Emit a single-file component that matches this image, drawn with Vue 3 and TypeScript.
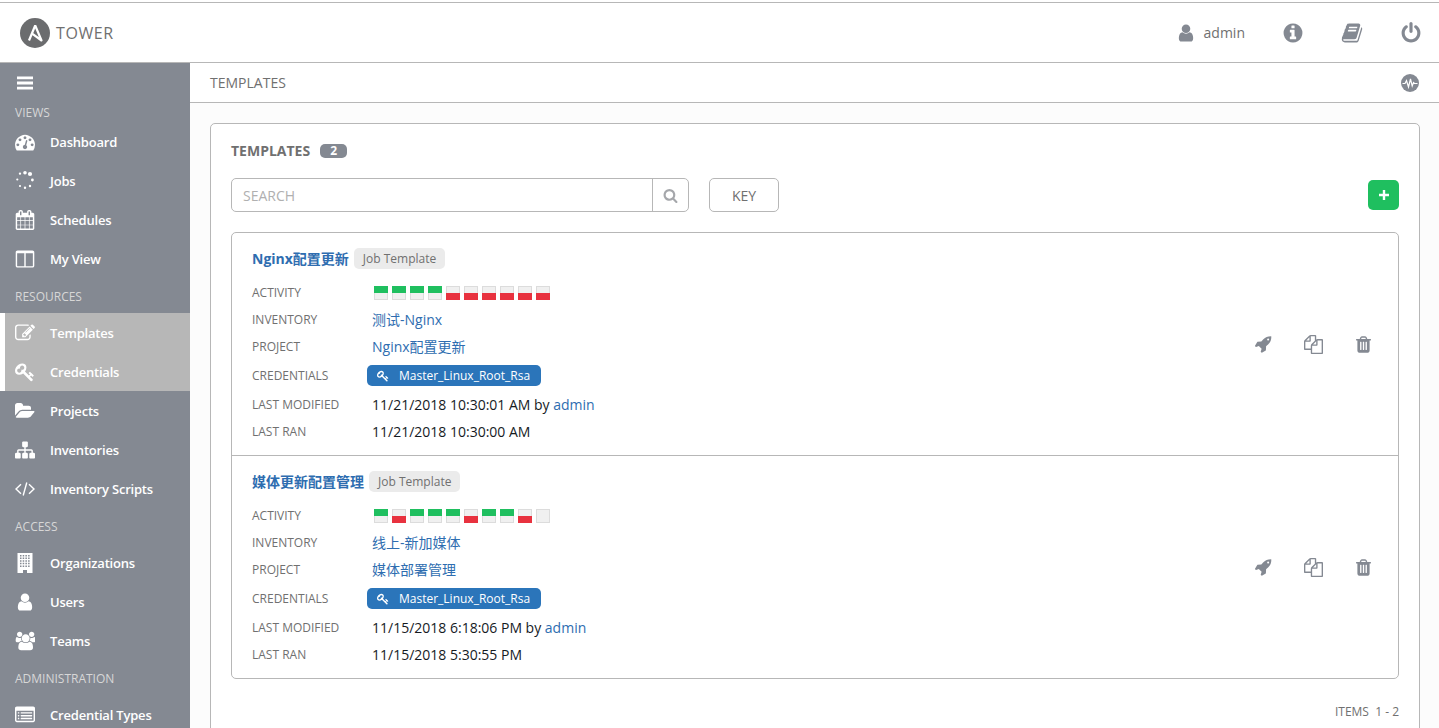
<script setup lang="ts">
import { h } from 'vue'

type IconDef = { vb?: string; d?: string; s?: string; sw?: number; rule?: 'evenodd' }

const dot = (x: number, y: number, r: number) =>
  `M${x - r} ${y}a${r} ${r} 0 1 0 ${2 * r} 0a${r} ${r} 0 1 0 ${-2 * r} 0z`

const windows = (() => {
  let d = 'M2.5 0h15v20h-5.5v-3h-4v3h-5.5z'
  for (let r = 0; r < 5; r++) for (let c = 0; c < 4; c++) d += `M${5 + c * 2.7} ${2 + r * 2.6}h1.5v1.5h-1.5z`
  return d
})()

const icons: Record<string, IconDef> = {
  bars: { vb: '0 0 20 20', d: 'M2 3.5h16v2.8H2zM2 8.6h16v2.8H2zM2 13.7h16v2.8H2z' },
  dashboard: { d: 'M384 1152q0-53-37.5-90.5t-90.5-37.5-90.5 37.5-37.5 90.5 37.5 90.5 90.5 37.5 90.5-37.5 37.5-90.5zm192-448q0-53-37.5-90.5t-90.5-37.5-90.5 37.5-37.5 90.5 37.5 90.5 90.5 37.5 90.5-37.5 37.5-90.5zm428 481l101-382q6-26-7.5-48.5t-38.5-29.5-48 6.5-30 39.5l-101 382q-60 5-107 43.5t-63 98.5q-20 77 20 146t117 89 146-20 89-117q16-60-6-117t-72-91zm660-33q0-53-37.5-90.5t-90.5-37.5-90.5 37.5-37.5 90.5 37.5 90.5 90.5 37.5 90.5-37.5 37.5-90.5zm-640-640q0-53-37.5-90.5t-90.5-37.5-90.5 37.5-37.5 90.5 37.5 90.5 90.5 37.5 90.5-37.5 37.5-90.5zm448 192q0-53-37.5-90.5t-90.5-37.5-90.5 37.5-37.5 90.5 37.5 90.5 90.5 37.5 90.5-37.5 37.5-90.5zm320 448q0 261-141 483-19 29-54 29h-1402q-35 0-54-29-141-221-141-483 0-182 71-348t191-286 286-191 348-71 348 71 286 191 191 286 71 348z' },
  jobs: { vb: '0 0 20 20', d: dot(15, 3, 2.1) + dot(10, 1.8, 1.8) + dot(5, 2.6, 1.2) + dot(2.3, 8.5, 1.1) + dot(5, 15, 1.1) + dot(10, 16.8, 1.2) + dot(15, 15, 1.2) + dot(17.4, 9, 1.4) },
  calendar: { d: 'M192 1664h288v-288h-288v288zm352 0h320v-288h-320v288zm-352-352h288v-320h-288v320zm352 0h320v-320h-320v320zm-352-384h288v-288h-288v288zm736 736h320v-288h-320v288zm-384-736h320v-288h-320v288zm768 736h288v-288h-288v288zm-384-352h320v-320h-320v320zm-352-864v-288q0-13-9.5-22.5t-22.5-9.5h-64q-13 0-22.5 9.5t-9.5 22.5v288q0 13 9.5 22.5t22.5 9.5h64q13 0 22.5-9.5t9.5-22.5zm736 864h288v-320h-288v320zm-384-384h320v-288h-320v288zm384 0h288v-288h-288v288zm32-480v-288q0-13-9.5-22.5t-22.5-9.5h-64q-13 0-22.5 9.5t-9.5 22.5v288q0 13 9.5 22.5t22.5 9.5h64q13 0 22.5-9.5t9.5-22.5zm384-64v1280q0 52-38 90t-90 38h-1408q-52 0-90-38t-38-90v-1280q0-52 38-90t90-38h128v-96q0-66 47-113t113-47h64q66 0 113 47t47 113v96h384v-96q0-66 47-113t113-47h64q66 0 113 47t47 113v96h128q52 0 90 38t38 90z' },
  columns: { d: 'M224 1536h608v-1152h-640v1120q0 13 9.5 22.5t22.5 9.5zm1376-32v-1120h-640v1152h608q13 0 22.5-9.5t9.5-22.5zm128-1216v1216q0 66-47 113t-113 47h-1344q-66 0-113-47t-47-113v-1216q0-66 47-113t113-47h1344q66 0 113 47t47 113z' },
  pencil: { d: 'M888 1184l116-116-152-152-116 116v56h96v96h56zm440-720q-16-16-33 1l-350 350q-17 17-1 33t33-1l350-350q17-17 1-33zm80 594v190q0 119-84.5 203.5t-203.5 84.5h-832q-119 0-203.5-84.5t-84.5-203.5v-832q0-119 84.5-203.5t203.5-84.5h832q63 0 117 25 15 7 18 23 3 17-9 29l-49 49q-14 14-32 8-23-6-45-6h-832q-66 0-113 47t-47 113v832q0 66 47 113t113 47h832q66 0 113-47t47-113v-126q0-13 9-22l64-64q15-15 35-7t20 29zm-96-738l288 288-672 672h-288v-288zm444 132l-92 92-288-288 92-92q28-28 68-28t68 28l152 152q28 28 28 68t-28 68z' },
  key: { d: 'M832 512q0-80-56-136t-136-56-136 56-56 136q0 42 19 83-41-19-83-19-80 0-136 56t-56 136 56 136 136 56 136-56 56-136q0-42-19-83 41 19 83 19 80 0 136-56t56-136zm851 704q0 17-49 66t-66 49q-9 0-28.5-16t-36.5-33-38.5-40-24.5-26l-96 96 220 220q28 28 28 68 0 42-39 81t-81 39q-40 0-68-28l-671-671q-176 131-365 131-163 0-265.5-102.5t-102.5-265.5q0-160 95-313t248-248 313-95q163 0 265.5 102.5t102.5 265.5q0 189-131 365l355 355 96-96q-3-3-26-24.5t-40-38.5-33-36.5-16-28.5q0-17 49-66t66-49q13 0 23 10 6 6 46 44.5t82 79.5 86.5 86 73 78 28.5 41z' },
  folder: { vb: '0 0 1920 1792', d: 'M1879 952q0 31-31 66l-336 396q-43 51-120.5 86.5t-143.5 35.5h-1088q-34 0-60.5-13t-26.5-43q0-31 31-66l336-396q43-51 120.5-86.5t143.5-35.5h1088q34 0 60.5 13t26.5 43zm-343-344v160h-832q-94 0-197 47.5t-164 119.5l-337 396-5 6q0-4-.5-12.5t-.5-12.5v-960q0-92 66-158t158-66h320q92 0 158 66t66 158v32h544q92 0 158 66t66 158z' },
  sitemap: { d: 'M1792 1248v320q0 40-28 68t-68 28h-320q-40 0-68-28t-28-68v-320q0-40 28-68t68-28h96v-192h-512v192h96q40 0 68 28t28 68v320q0 40-28 68t-68 28h-320q-40 0-68-28t-28-68v-320q0-40 28-68t68-28h96v-192h-512v192h96q40 0 68 28t28 68v320q0 40-28 68t-68 28h-320q-40 0-68-28t-28-68v-320q0-40 28-68t68-28h96v-192q0-52 38-90t90-38h512v-192h-96q-40 0-68-28t-28-68v-320q0-40 28-68t68-28h320q40 0 68 28t28 68v320q0 40-28 68t-68 28h-96v192h512q52 0 90 38t38 90v192h96q40 0 68 28t28 68z' },
  code: { vb: '0 0 20 20', s: 'M6 5.2L1 10l5 4.8M14 5.2L19 10l-5 4.8M11.8 3.5L8.2 16.5', sw: 1.4 },
  building: { vb: '0 0 20 20', d: windows, rule: 'evenodd' },
  user: { d: 'M1536 1399q0 109-62.5 187t-150.5 78h-854q-88 0-150.5-78t-62.5-187q0-85 8.5-160.5t31.5-152 58.5-131 94-89 134.5-34.5q131 128 313 128t313-128q76 0 134.5 34.5t94 89 58.5 131 31.5 152 8.5 160.5zm-256-887q0 159-112.5 271.5t-271.5 112.5-271.5-112.5-112.5-271.5 112.5-271.5 271.5-112.5 271.5 112.5 112.5 271.5z' },
  users: { vb: '0 0 1920 1792', d: 'M657 896q-162 5-265 128h-134q-82 0-138-40.5t-56-118.5q0-353 124-353 6 0 43.5 21t97.5 42.5 119 21.5q67 0 133-23-5 37-5 66 0 139 81 256zm1071 637q0 120-73 189.5t-194 69.5h-874q-121 0-194-69.5t-73-189.5q0-53 3.5-103.5t14-109 26.5-108.5 43-97.5 62-81 85.5-53.5 111.5-20q10 0 43 21.5t73 48 107 48 135 21.5 135-21.5 107-48 73-48 43-21.5q61 0 111.5 20t85.5 53.5 62 81 43 97.5 26.5 108.5 14 109 3.5 103.5zm-1024-1277q0 106-75 181t-181 75-181-75-75-181 75-181 181-75 181 75 75 181zm704 384q0 159-112.5 271.5t-271.5 112.5-271.5-112.5-112.5-271.5 112.5-271.5 271.5-112.5 271.5 112.5 112.5 271.5zm576 225q0 78-56 118.5t-138 40.5h-134q-103-123-265-128 81-117 81-256 0-29-5-66 66 23 133 23 59 0 119-21.5t97.5-42.5 43.5-21q124 0 124 353zm-128-609q0 106-75 181t-181 75-181-75-75-181 75-181 181-75 181 75 75 181z' },
  list: { d: 'M384 1184v64q0 13-9.5 22.5t-22.5 9.5h-64q-13 0-22.5-9.5t-9.5-22.5v-64q0-13 9.5-22.5t22.5-9.5h64q13 0 22.5 9.5t9.5 22.5zm0-256v64q0 13-9.5 22.5t-22.5 9.5h-64q-13 0-22.5-9.5t-9.5-22.5v-64q0-13 9.5-22.5t22.5-9.5h64q13 0 22.5 9.5t9.5 22.5zm0-256v64q0 13-9.5 22.5t-22.5 9.5h-64q-13 0-22.5-9.5t-9.5-22.5v-64q0-13 9.5-22.5t22.5-9.5h64q13 0 22.5 9.5t9.5 22.5zm1152 512v64q0 13-9.5 22.5t-22.5 9.5h-960q-13 0-22.5-9.5t-9.5-22.5v-64q0-13 9.5-22.5t22.5-9.5h960q13 0 22.5 9.5t9.5 22.5zm0-256v64q0 13-9.5 22.5t-22.5 9.5h-960q-13 0-22.5-9.5t-9.5-22.5v-64q0-13 9.5-22.5t22.5-9.5h960q13 0 22.5 9.5t9.5 22.5zm0-256v64q0 13-9.5 22.5t-22.5 9.5h-960q-13 0-22.5-9.5t-9.5-22.5v-64q0-13 9.5-22.5t22.5-9.5h960q13 0 22.5 9.5t9.5 22.5zm128 704v-832q0-13-9.5-22.5t-22.5-9.5h-1472q-13 0-22.5 9.5t-9.5 22.5v832q0 13 9.5 22.5t22.5 9.5h1472q13 0 22.5-9.5t9.5-22.5zm128-1088v1088q0 66-47 113t-113 47h-1472q-66 0-113-47t-47-113v-1088q0-66 47-113t113-47h1472q66 0 113 47t47 113z' },
  info: { d: 'M1152 1376v-160q0-14-9-23t-23-9h-96v-512q0-14-9-23t-23-9h-320q-14 0-23 9t-9 23v160q0 14 9 23t23 9h96v320h-96q-14 0-23 9t-9 23v160q0 14 9 23t23 9h448q14 0 23-9t9-23zm-128-896v-160q0-14-9-23t-23-9h-192q-14 0-23 9t-9 23v160q0 14 9 23t23 9h192q14 0 23-9t9-23zm640 416q0 209-103 385.5t-279.5 279.5-385.5 103-385.5-103-279.5-279.5-103-385.5 103-385.5 279.5-279.5 385.5-103 385.5 103 279.5 279.5 103 385.5z' },
  power: { d: 'M1664 896q0 156-61 298t-164 245-245 164-298 61-298-61-245-164-164-245-61-298q0-182 80.5-343t226.5-270q43-32 95.5-25t83.5 50q32 42 24.5 94.5t-49.5 84.5q-98 74-151.5 181t-53.5 228q0 104 40.5 198.5t109.5 163.5 163.5 109.5 198.5 40.5 198.5-40.5 163.5-109.5 109.5-163.5 40.5-198.5q0-121-53.5-228t-151.5-181q-42-32-49.5-84.5t24.5-94.5q31-43 84-50t95 25q146 109 226.5 270t80.5 343zm-640-768v640q0 52-38 90t-90 38-90-38-38-90v-640q0-52 38-90t90-38 90 38 38 90z' },
  book: { d: 'M1703 478q40 57 18 129l-275 906q-19 64-76.5 107.5t-122.5 43.5h-923q-77 0-148.5-53.5t-99.5-131.5q-24-67-2-127 0-4 3-27t4-37q1-8-3-21.5t-3-19.5q2-11 8-21t16.5-23.5 16.5-23.5q23-38 45-91.5t30-91.5q3-10 .5-30t-.5-28q3-11 17-28t17-23q21-36 42-92t25-90q1-9-2.5-32t.5-28q4-13 22-30.5t22-22.5q19-26 42.5-84.5t27.5-96.5q1-8-3-25.5t-2-26.5q2-8 9-18t18-23 17-21q8-12 16.5-30.5t15-35 16-36 19.5-32 26.5-23.5 36-11.5 47.5 5.5l-1 3q38-9 51-9h761q74 0 114 56t18 130l-274 906q-36 119-71.5 153.5t-128.5 34.5h-869q-27 0-38 15-11 16-1 43 24 70 144 70h923q29 0 56-15.5t35-41.5l300-987q7-22 5-57 38 15 59 43zm-1064 2q-4 13 2 22.5t20 9.5h608q13 0 25.5-9.5t16.5-22.5l21-64q4-13-2-22.5t-20-9.5h-608q-13 0-25.5 9.5t-16.5 22.5zm-83 256q-4 13 2 22.5t20 9.5h608q13 0 25.5-9.5t16.5-22.5l21-64q4-13-2-22.5t-20-9.5h-608q-13 0-25.5 9.5t-16.5 22.5z' },
  search: { d: 'M1216 832q0-185-131.5-316.5t-316.5-131.5-316.5 131.5-131.5 316.5 131.5 316.5 316.5 131.5 316.5-131.5 131.5-316.5zm512 832q0 52-38 90t-90 38q-54 0-90-38l-343-342q-179 124-399 124-143 0-273.5-55.5t-225-150-150-225-55.5-273.5 55.5-273.5 150-225 225-150 273.5-55.5 273.5 55.5 225 150 150 225 55.5 273.5q0 220-124 399l343 343q37 37 37 90z' },
  rocket: { d: 'M1504 448q0-40-28-68t-68-28-68 28-28 68 28 68 68 28 68-28 28-68zm224-288q0 249-75.5 430.5t-253.5 360.5q-81 80-195 176l-20 379q-2 16-16 26l-384 224q-7 4-16 4-12 0-23-9l-64-64q-13-14-8-32l85-276-281-281-276 85q-3 1-9 1-14 0-23-9l-64-64q-17-19-5-39l224-384q10-14 26-16l379-20q96-114 176-195 188-187 358-258t431-71q14 0 23 9t9 23z' },
  copy: { d: 'M1696 384q40 0 68 28t28 68v1216q0 40-28 68t-68 28h-960q-40 0-68-28t-28-68v-288h-544q-40 0-68-28t-28-68v-672q0-40 20-88t48-76l408-408q28-28 76-48t88-20h416q40 0 68 28t28 68v328q68-40 128-40h416zm-544 213l-299 299h299v-299zm-640-384l-299 299h299v-299zm196 647l316-316v-416h-384v416q0 40-28 68t-68 28h-416v640h512v-256q0-40 20-88t48-76zm956 804v-1152h-384v416q0 40-28 68t-68 28h-416v640h896z' },
  trash: { d: 'M704 1376v-704q0-14-9-23t-23-9h-64q-14 0-23 9t-9 23v704q0 14 9 23t23 9h64q14 0 23-9t9-23zm256 0v-704q0-14-9-23t-23-9h-64q-14 0-23 9t-9 23v704q0 14 9 23t23 9h64q14 0 23-9t9-23zm256 0v-704q0-14-9-23t-23-9h-64q-14 0-23 9t-9 23v704q0 14 9 23t23 9h64q14 0 23-9t9-23zm-544-992h448l-48-117q-7-9-17-11h-317q-10 2-17 11zm928 32v64q0 14-9 23t-23 9h-96v948q0 83-47 143.5t-113 60.5h-832q-66 0-113-58.5t-47-141.5v-952h-96q-14 0-23-9t-9-23v-64q0-14 9-23t23-9h309l70-167q15-37 54-63t79-26h320q40 0 79 26t54 63l70 167h309q14 0 23 9t9 23z' },
  plus: { vb: '0 0 12 12', d: 'M4.8 1h2.4v3.8H11v2.4H7.2V11H4.8V7.2H1V4.8h3.8z' },
}

const Ico = (props: { name: string; size?: number }) => {
  const i = icons[props.name]
  const size = props.size ?? 20
  const kids = []
  if (i.d) kids.push(h('path', { d: i.d, fill: 'currentColor', 'fill-rule': i.rule ?? 'nonzero' }))
  if (i.s) kids.push(h('path', { d: i.s, fill: 'none', stroke: 'currentColor', 'stroke-width': i.sw ?? 1.4 }))
  return h('svg', { viewBox: i.vb ?? '0 0 1792 1792', width: size, height: size }, kids)
}
Ico.props = ['name', 'size']

const nav = [
  { title: 'VIEWS', h: 20, items: [
    { label: 'Dashboard', icon: 'dashboard' },
    { label: 'Jobs', icon: 'jobs' },
    { label: 'Schedules', icon: 'calendar' },
    { label: 'My View', icon: 'columns' },
  ] },
  { title: 'RESOURCES', h: 35, items: [
    { label: 'Templates', icon: 'pencil', active: true },
    { label: 'Credentials', icon: 'key', active: true },
    { label: 'Projects', icon: 'folder' },
    { label: 'Inventories', icon: 'sitemap' },
    { label: 'Inventory Scripts', icon: 'code' },
  ] },
  { title: 'ACCESS', h: 35, items: [
    { label: 'Organizations', icon: 'building' },
    { label: 'Users', icon: 'user' },
    { label: 'Teams', icon: 'users' },
  ] },
  { title: 'ADMINISTRATION', h: 35, items: [
    { label: 'Credential Types', icon: 'list' },
  ] },
]

const templates = [
  {
    name: 'Nginx配置更新',
    activity: 'ssssffffff',
    inventory: '测试-Nginx',
    project: 'Nginx配置更新',
    modified: '11/21/2018 10:30:01 AM',
    ran: '11/21/2018 10:30:00 AM',
  },
  {
    name: '媒体更新配置管理',
    activity: 'sfsssfssfn',
    inventory: '线上-新加媒体',
    project: '媒体部署管理',
    modified: '11/15/2018 6:18:06 PM',
    ran: '11/15/2018 5:30:55 PM',
  },
]
</script>

<template>
  <div class="app">
    <header class="topbar">
      <div class="brand">
        <svg class="logo" viewBox="0 0 30 30" width="30" height="30">
          <circle cx="15" cy="15" r="15" fill="#6b6c6e" />
          <path d="M15.2 7.5L9 22.5M15.2 7.5L21.5 22.5L12.5 15.8" fill="none" stroke="#fff" stroke-width="2.2" stroke-linejoin="round" />
        </svg>
        <span class="brand-name">TOWER</span>
      </div>
      <div class="top-actions">
        <div class="who"><Ico name="user" :size="20" /><span>admin</span></div>
        <Ico name="info" :size="22" />
        <Ico name="book" :size="22" />
        <Ico name="power" :size="22" />
      </div>
    </header>

    <div class="body">
      <aside class="side">
        <div class="burger"><Ico name="bars" /></div>
        <section v-for="s in nav" :key="s.title">
          <div class="side-head" :style="{ height: s.h + 'px' }">{{ s.title }}</div>
          <a v-for="it in s.items" :key="it.label" class="side-item" :class="{ active: it.active }">
            <span class="side-ico"><Ico :name="it.icon" /></span>
            <span>{{ it.label }}</span>
          </a>
        </section>
      </aside>

      <main class="main">
        <div class="crumbs">
          <span>TEMPLATES</span>
          <svg class="pulse" viewBox="0 0 18 18" width="18" height="18">
            <circle cx="9" cy="9" r="9" fill="#848992" />
            <path d="M1.5 9.5h2.5l1.5-3 2 6.5 2-8 1.7 7 1.3-3.5 1 1h3" fill="none" stroke="#fff" stroke-width="1.2" />
          </svg>
        </div>

        <div class="card">
          <div class="card-title">
            <b>TEMPLATES</b>
            <span class="count">2</span>
          </div>

          <div class="tools">
            <div class="search">
              <input class="search-input" placeholder="SEARCH" />
              <span class="search-btn"><Ico name="search" :size="15" /></span>
            </div>
            <button class="key-btn">KEY</button>
            <button class="add-btn"><Ico name="plus" :size="12" /></button>
          </div>

          <div class="list">
            <article v-for="t in templates" :key="t.name" class="row">
              <div class="row-main">
                <div class="row-title">
                  <a class="name">{{ t.name }}</a>
                  <span class="type">Job Template</span>
                </div>
                <div class="field">
                  <label>ACTIVITY</label>
                  <div class="sparks">
                    <i v-for="(a, n) in t.activity.split('')" :key="n" class="spark" :class="a">
                      <em v-if="a !== 'n'"></em>
                    </i>
                  </div>
                </div>
                <div class="field"><label>INVENTORY</label><a>{{ t.inventory }}</a></div>
                <div class="field"><label>PROJECT</label><a>{{ t.project }}</a></div>
                <div class="field cred">
                  <label>CREDENTIALS</label>
                  <span class="chip"><Ico name="key" :size="12" /><span>Master_Linux_Root_Rsa</span></span>
                </div>
                <div class="field"><label>LAST MODIFIED</label><span class="val">{{ t.modified }} by <a>admin</a></span></div>
                <div class="field"><label>LAST RAN</label><span class="val">{{ t.ran }}</span></div>
              </div>
              <div class="row-actions">
                <span class="act rocket"><Ico name="rocket" :size="18" /></span>
                <span class="act"><Ico name="copy" :size="19" /></span>
                <span class="act"><Ico name="trash" :size="19" /></span>
              </div>
            </article>
          </div>

          <div class="pager">ITEMS &nbsp;1 - 2</div>
        </div>
      </main>
    </div>
  </div>
</template>

<style>
html, body { margin: 0; height: 100%; overflow: hidden; background: #fff; }
</style>

<style scoped>
.app {
  height: 728px;
  overflow: hidden;
  font-family: "Open Sans", "Noto Sans CJK SC", sans-serif;
  font-size: 14px;
  line-height: 20px;
  color: #161b1f;
  padding-top: 2px;
  box-sizing: border-box;
  display: flex;
  flex-direction: column;
}
a { color: #2e6db0; text-decoration: none; }
svg { display: block; flex: none; }

.topbar {
  flex: none;
  height: 59px;
  border-top: 1px solid #b7b7b7;
  border-bottom: 1px solid #b7b7b7;
  display: flex;
  align-items: center;
  justify-content: space-between;
  padding: 0 17px 0 20px;
  background: #fff;
}
.brand { display: flex; align-items: center; gap: 6px; }
.brand-name { font-size: 16px; color: #707070; letter-spacing: 0.6px; }
.top-actions { display: flex; align-items: center; gap: 37px; color: #848992; }
.who { display: flex; align-items: center; gap: 8px; }
.who span { color: #707070; font-size: 14px; }

.body { flex: 1; display: flex; min-height: 0; }

.side { flex: none; width: 190px; background: #848992; color: #fff; }
.burger { height: 39px; display: flex; align-items: center; padding-left: 15px; }
.side-head {
  box-sizing: border-box;
  display: flex;
  align-items: center;
  padding: 2px 0 0 15px;
  font-size: 12px;
  color: #d7d7d7;
}
.side-item {
  height: 39px;
  box-sizing: border-box;
  display: flex;
  align-items: center;
  padding-left: 15px;
  color: #fff;
  font-weight: 600;
  font-size: 13px;
  letter-spacing: -0.2px;
}
.side-item.active { background: #b7b7b7; border-left: 5px solid #fff; padding-left: 10px; }
.side-ico { width: 20px; margin-right: 15px; display: flex; }

.main { flex: 1; min-width: 0; background: #fcfcfc; }
.crumbs {
  height: 39px;
  border-bottom: 1px solid #b7b7b7;
  background: #fff;
  display: flex;
  align-items: center;
  justify-content: space-between;
  padding: 0 20px;
  color: #707070;
}
.card {
  margin: 20px 19px 0 20px;
  padding: 17px 20px 0;
  background: #fff;
  border: 1px solid #b7b7b7;
  border-radius: 5px;
  height: 640px;
}
.card-title { height: 20px; display: flex; align-items: center; gap: 10px; color: #707070; }
.card-title b { font-weight: 700; }
.count {
  width: 27px;
  height: 14px;
  line-height: 14px;
  text-align: center;
  background: #848992;
  color: #fff;
  border-radius: 5px;
  font-size: 12px;
  font-weight: 700;
}

.tools { margin-top: 17px; height: 34px; display: flex; align-items: center; gap: 20px; }
.search {
  width: 458px;
  height: 34px;
  box-sizing: border-box;
  display: flex;
  border: 1px solid #b7b7b7;
  border-radius: 5px;
}
.search-input {
  flex: 1;
  min-width: 0;
  border: 0;
  outline: 0;
  background: transparent;
  padding: 0 11px;
  font: 14px "Open Sans", sans-serif;
}
.search-input::placeholder { color: #b0b0b0; opacity: 1; }
.search-btn {
  width: 35px;
  border-left: 1px solid #b7b7b7;
  color: #a5a7ab;
  display: flex;
  align-items: center;
  justify-content: center;
}
.key-btn {
  width: 70px;
  height: 34px;
  background: #fff;
  border: 1px solid #b7b7b7;
  border-radius: 5px;
  color: #707070;
  font: 14px "Open Sans", sans-serif;
  padding: 0;
}
.add-btn {
  margin-left: auto;
  width: 31px;
  height: 30px;
  border: 0;
  border-radius: 5px;
  background: #1fbf5f;
  color: #fff;
  padding: 0;
  display: flex;
  align-items: center;
  justify-content: center;
}

.list { margin-top: 20px; border: 1px solid #b7b7b7; border-radius: 5px; }
.row { display: flex; align-items: center; justify-content: space-between; padding: 15px 20px 10px; height: 222px; box-sizing: border-box; }
.row + .row { border-top: 1px solid #b7b7b7; height: 223px; }
.row-main { flex: 1; }
.row-title { display: flex; align-items: center; gap: 5px; height: 21px; margin-bottom: 10px; }
.name { font-weight: 700; font-size: 14px; }
.type {
  background: #ebebeb;
  color: #707070;
  font-size: 12px;
  height: 21px;
  line-height: 21px;
  padding: 0 9px;
  border-radius: 5px;
}
.field { height: 27px; display: flex; align-items: center; font-size: 14px; }
.field.cred { height: 31px; }
.field label { width: 120px; flex: none; font-size: 12px; color: #707070; }
.val { color: #161b1f; }
.sparks { display: flex; gap: 4px; margin-left: 2px; }
.spark {
  width: 14px;
  height: 14px;
  display: flex;
  flex-direction: column;
  background: #f0f0f0;
  box-shadow: inset 0 0 0 1px #dcdcdc;
}
.spark em { display: block; height: 7px; }
.spark.s em { background: #1fbf5f; }
.spark.f { justify-content: flex-end; }
.spark.f em { background: #e8323f; }
.chip {
  margin-left: -5px;
  width: 174px;
  box-sizing: border-box;
  height: 21px;
  display: flex;
  align-items: center;
  gap: 10px;
  padding-left: 10px;
  border-radius: 5px;
  background: #2b75ba;
  color: #fff;
  font-size: 12px;
}
.row-actions { display: flex; align-items: center; gap: 30px; padding: 0 4.5px 5px 0; color: #848992; }
.act { width: 20px; display: flex; justify-content: center; }
.act.rocket { justify-content: flex-start; }
.pager { margin-top: 23px; text-align: right; font-size: 12px; color: #707070; }
</style>
